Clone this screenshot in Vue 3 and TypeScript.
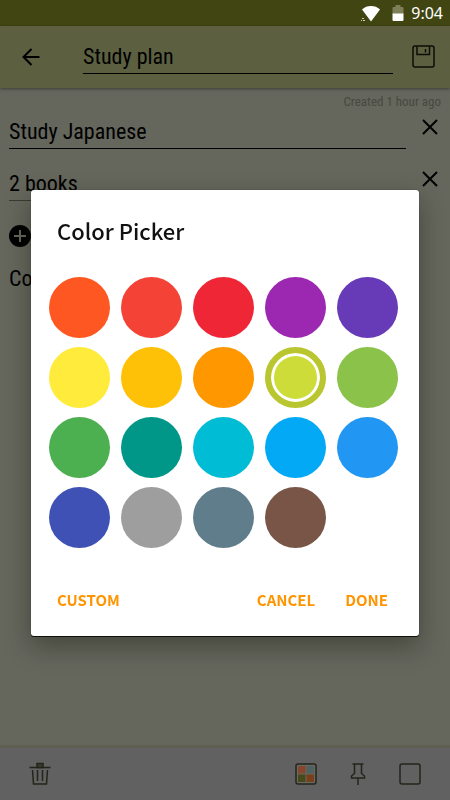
<script setup lang="ts">
import { ref } from 'vue'

interface Swatch {
  name: string
  value: string
}

const swatches: Swatch[] = [
  { name: 'Deep orange', value: '#ff5722' },
  { name: 'Red', value: '#f44336' },
  { name: 'Crimson', value: '#ef2635' },
  { name: 'Purple', value: '#9c27b0' },
  { name: 'Deep purple', value: '#673ab7' },
  { name: 'Yellow', value: '#ffeb3b' },
  { name: 'Amber', value: '#ffc107' },
  { name: 'Orange', value: '#ff9800' },
  { name: 'Lime', value: '#cddc39' },
  { name: 'Light green', value: '#8bc34a' },
  { name: 'Green', value: '#4caf50' },
  { name: 'Teal', value: '#009688' },
  { name: 'Cyan', value: '#00bcd4' },
  { name: 'Light blue', value: '#03a9f4' },
  { name: 'Blue', value: '#2196f3' },
  { name: 'Indigo', value: '#3f51b5' },
  { name: 'Grey', value: '#9e9e9e' },
  { name: 'Blue grey', value: '#607d8b' },
  { name: 'Brown', value: '#795548' },
]

const selected = ref('Lime')
const title = ref('Study plan')
const items = ref([{ text: 'Study Japanese' }, { text: '2 books' }])
</script>

<template>
  <div class="screen">
    <div class="status">
      <svg class="wifi" viewBox="0 0 20 17" width="20" height="17" aria-hidden="true">
        <path d="M10 16.500 1 4.500C3.500 2 6.500 1 10 1s6.500 1 9 3.500z" fill="#fff" />
        <path d="M1 13h2v1H1zM2 15h2v1H2zM0 15h1v1H0z" fill="#c9cab8" />
      </svg>
      <svg class="battery" viewBox="0 0 12 18" width="12" height="18" aria-hidden="true">
        <path d="M3.500 1h5v2h2q1 0 1 1v6H.5V4q0-1 1-1h2z" fill="#7c7f58" />
        <path d="M.5 9.500h11V16q0 1-1 1h-9q-1 0-1-1z" fill="#fff" />
      </svg>
      <span class="clock">9:04</span>
    </div>

    <header class="toolbar">
      <button class="icon" type="button" aria-label="Back">
        <svg viewBox="0 0 18 18" width="18" height="18">
          <path d="M17.500 9H1.500M9.500 1 1.500 9l8 8" fill="none" stroke="#000" stroke-width="2" />
        </svg>
      </button>
      <input v-model="title" class="field title-field" type="text" aria-label="Title" />
      <button class="icon" type="button" aria-label="Save">
        <svg viewBox="0 0 24 24" width="24" height="24">
          <rect x="2" y="1" width="21" height="21" rx="2" fill="none" stroke="#0c0d06" stroke-width="1.500" />
          <path d="M6 1.500v8h12.500v-8M14.500 4v3.500" fill="none" stroke="#0c0d06" stroke-width="1.500" />
        </svg>
      </button>
    </header>

    <main class="content">
      <p class="created">Created 1 hour ago</p>
      <div v-for="(item, i) in items" :key="i" class="row">
        <input v-model="item.text" class="field" :class="{ faint: i > 0 }" type="text" :aria-label="`Item ${i + 1}`" />
        <button class="icon remove" type="button" aria-label="Remove item">
          <svg viewBox="0 0 16 16" width="16" height="16">
            <path d="m1 1 14 14M15 1 1 15" stroke="#000" stroke-width="2" />
          </svg>
        </button>
      </div>
      <button class="icon add" type="button" aria-label="Add item">
        <svg viewBox="0 0 22 22" width="22" height="22">
          <circle cx="11" cy="11" r="11" fill="#000" />
          <path d="M11 5v12M5 11h12" stroke="#65665c" stroke-width="2" />
        </svg>
      </button>
      <p class="note">Co</p>
    </main>

    <footer class="bottom">
      <button class="icon" type="button" aria-label="Delete">
        <svg viewBox="0 0 22 24" width="22" height="24" fill="none" stroke="#23251a" stroke-width="1.500">
          <path d="M.5 5.500h21M3.500 8l1 14h13l1-14M8.500 8v11M13.500 8v11" />
          <path d="M8 1.500h6v4H8z" fill="#3b3c30" />
        </svg>
      </button>
      <span class="spacer"></span>
      <button class="icon" type="button" aria-label="Color">
        <svg viewBox="0 0 22 22" width="22" height="22">
          <rect x="1" y="1" width="20" height="20" rx="2" fill="#686960" stroke="#23251a" stroke-width="1.500" />
          <path d="M3 3h7.500v7.500H3z" fill="#86462d" />
          <path d="M11.500 3H19v7.500h-7.500z" fill="#4f6260" />
          <path d="M3 11.500h7.500V19H3z" fill="#47491b" />
          <path d="M11.500 11.500H19V19h-7.500z" fill="#793f1d" />
        </svg>
      </button>
      <button class="icon" type="button" aria-label="Pin">
        <svg viewBox="0 0 22 22" width="22" height="22" fill="none" stroke="#23251a" stroke-width="1.500">
          <path d="M5.500 1h11M7.500 1v9.500L4.500 13v2h13v-2l-3-2.500V1M11 15v7" />
        </svg>
      </button>
      <button class="icon" type="button" aria-label="Checkbox list">
        <svg viewBox="0 0 22 22" width="22" height="22">
          <rect x="1" y="1" width="20" height="20" rx="2" fill="none" stroke="#23251a" stroke-width="1.500" />
        </svg>
      </button>
    </footer>

    <div class="scrim">
      <section class="dialog" role="dialog" aria-labelledby="picker-title">
        <h2 id="picker-title">Color Picker</h2>
        <div class="swatches">
          <button
            v-for="s in swatches"
            :key="s.name"
            type="button"
            class="swatch"
            :class="{ selected: s.name === selected }"
            :style="{ backgroundColor: s.value }"
            :aria-label="s.name"
            :aria-pressed="s.name === selected"
            @click="selected = s.name"
          ></button>
        </div>
        <div class="actions">
          <button type="button" class="action">CUSTOM</button>
          <span class="spacer"></span>
          <button type="button" class="action">CANCEL</button>
          <button type="button" class="action">DONE</button>
        </div>
      </section>
    </div>
  </div>
</template>

<style>
body {
  background: #65665c;
}
</style>

<style scoped>
* {
  box-sizing: border-box;
}

.screen {
  display: flex;
  flex-direction: column;
  min-height: 100vh;
  color: #000;
  background: #65665c;
  font-family: 'Roboto Condensed', 'Liberation Sans Narrow', Roboto, sans-serif;
}

.status {
  display: flex;
  align-items: center;
  justify-content: flex-end;
  height: 26px;
  padding: 0 7px 0 0;
  background: #414512;
}

.battery {
  margin: 0 7px 0 11px;
}

.clock {
  color: #fff;
  font: 16px/24px 'Noto Sans', sans-serif;
}

.icon {
  display: flex;
  flex: none;
  padding: 0;
  border: 0;
  background: none;
}

.toolbar {
  display: flex;
  align-items: center;
  height: 62px;
  padding: 0 15px 0 22px;
  background: #5c6040;
  box-shadow: 0 1px 3px rgba(0, 0, 0, 0.4);
}

.field {
  flex: 1;
  min-width: 0;
  height: 34px;
  padding: 0;
  border: 0;
  border-bottom: 1px solid #000;
  border-radius: 0;
  outline: 0;
  color: #000;
  background: none;
  font: inherit;
  font-size: 22px;
}

.title-field {
  margin: 0 18px 0 43px;
}

.faint {
  border-bottom-color: #3a3b34;
}

.content {
  display: flex;
  flex: 1;
  flex-direction: column;
  padding: 6px 9px;
}

.created {
  margin: 0;
  color: #484940;
  font-size: 13px;
  line-height: 16px;
  text-align: right;
}

.row {
  display: flex;
  align-items: flex-start;
  height: 52px;
  padding: 5px 3px 0 0;
}

.remove {
  margin: 4px 0 0 16px;
}

.add {
  margin-top: 11px;
}

.note {
  margin: 16px 0 0;
  font-size: 22px;
  line-height: 32px;
}

.bottom {
  display: flex;
  align-items: center;
  gap: 30px;
  height: 55px;
  padding: 0 29px;
  border-top: 3px solid #5e5f51;
  background: #616161;
}

.spacer {
  flex: 1;
}

.scrim {
  position: fixed;
  inset: 0;
  display: flex;
  align-items: center;
  padding: 26px 31px 0;
}

.dialog {
  flex: 1;
  padding: 22px 21px 18px 18px;
  border-radius: 3px;
  background: #fff;
  box-shadow: 0 1px 0 #0c1206, 0 0 1px #22251a, 0 10px 26px rgba(20, 20, 10, 0.4);
  font-family: 'Noto Sans CJK JP', 'Noto Sans', sans-serif;
}

h2 {
  margin: 0 0 29px 8px;
  color: #111;
  font-size: 22px;
  font-weight: 500;
  line-height: 36px;
}

.swatches {
  display: grid;
  grid-template-columns: repeat(5, 61px);
  justify-content: space-between;
  row-gap: 9px;
}

.swatch {
  width: 61px;
  height: 61px;
  padding: 0;
  border: 0;
  border-radius: 50%;
}

.selected {
  border: 6px solid #b9c62f;
  box-shadow: inset 0 0 0 3px #fff;
}

.actions {
  display: flex;
  margin-top: 34px;
  padding: 0 10px 0 8px;
}

.action {
  padding: 0;
  border: 0;
  color: #ff9500;
  background: none;
  font: inherit;
  font-size: 15px;
  font-weight: 700;
  line-height: 36px;
}

.action + .action {
  margin-left: 30px;
}
</style>
